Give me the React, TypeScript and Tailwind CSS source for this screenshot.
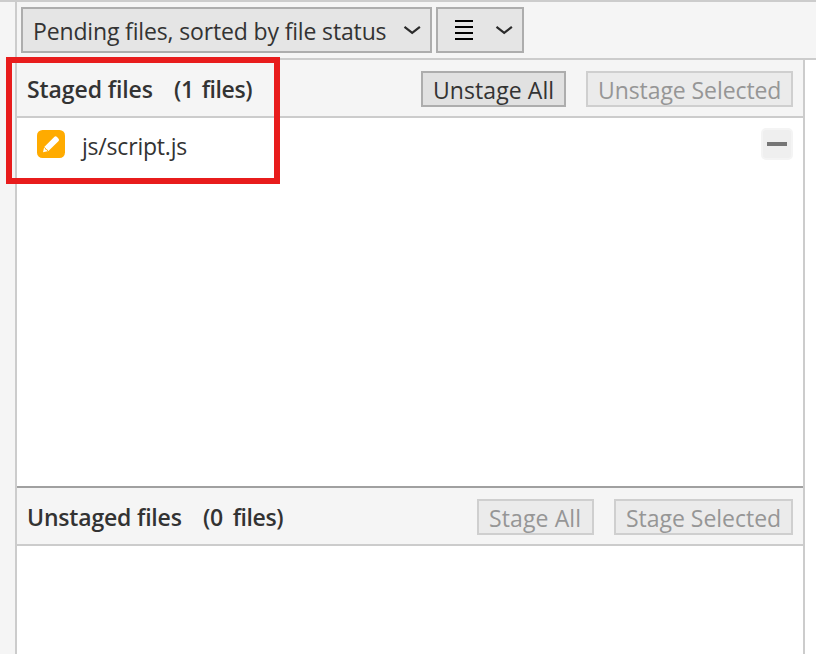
import type { ReactNode } from "react";

function Chevron() {
  return (
    <svg width="18" height="10" viewBox="0 0 18 10" fill="none" stroke="#2b2b2b" strokeWidth="2.2" className="block shrink-0">
      <path d="M1.5 1.8 L9.2 7.8 L16.9 1.8" />
    </svg>
  );
}

function ActionButton({ children, className }: { children: ReactNode; className: string }) {
  return (
    <button className={`flex h-9 shrink-0 items-center border-2 pt-0.5 pl-[10px] whitespace-nowrap ${className}`}>
      {children}
    </button>
  );
}

const enabled = "border-[#adadad] bg-[#e1e1e1] text-[#333333]";
const disabled = "border-[#cfcfcf] bg-[#ebebeb] text-[#969696]";

function PencilBadge() {
  return (
    <svg width="28" height="28" viewBox="0 0 28 28" className="block shrink-0">
      <rect width="28" height="28" rx="5.5" fill="#ffab00" />
      <path
        d="M6 22.2 L7.2 17 L17.2 7 Q18.6 5.6 20 7 L21.4 8.4 Q22.8 9.8 21.4 11.2 L11.4 21.1 Z"
        fill="#ffffff"
      />
      <path d="M7.2 17.4 L8.3 18 L8.7 19.4 L10.2 19.8 L10.8 21" fill="none" stroke="#ffab00" strokeWidth="0.9" />
    </svg>
  );
}

export default function App() {
  return (
    <div className="relative flex h-[654px] w-[816px] flex-col overflow-hidden border-t-2 border-[#cccccc] bg-[#f5f5f5] font-['Open_Sans','Noto_Sans',sans-serif] text-[23px] leading-[32px] text-[#333333]">
      <div className="flex min-h-0 flex-1">
        <div className="w-[17px] shrink-0 border-r-2 border-[#cccccc]" />
        <div className="flex min-w-0 flex-1 flex-col">
          <div className="flex h-[58px] shrink-0 gap-1 border-b-2 border-[#cccccc] pt-[5px] pl-1">
            <button className="flex h-[46px] w-[411px] items-center justify-between border-2 border-[#adadad] bg-[#e5e5e5] pr-[9px] pl-[10px]">
              <span className="pt-0.5 tracking-[-0.15px] whitespace-nowrap">Pending files, sorted by file status</span>
              <Chevron />
            </button>
            <button className="flex h-[46px] w-[88px] items-center justify-between border-2 border-[#adadad] bg-[#e5e5e5] pr-[9px] pl-[17px]">
              <span className="flex w-[18px] flex-col gap-1">
                <span className="h-[2px] bg-black" />
                <span className="h-[2px] bg-black" />
                <span className="h-[2px] bg-black" />
                <span className="h-[2px] bg-black" />
              </span>
              <Chevron />
            </button>
          </div>
          <div className="flex min-h-0 flex-1 bg-white">
            <div className="flex w-[788px] flex-col border-r-2 border-[#cccccc]">
              <div className="flex h-[58px] shrink-0 items-center border-b-2 border-[#cccccc] bg-[#f5f5f5] pr-[10px] pl-[10px]">
                <h2 className="flex flex-1 pt-0.5 font-semibold whitespace-nowrap">
                  <span className="w-[147px] tracking-[-0.09px]">Staged files</span>
                  <span className="flex gap-2 tracking-[-0.4px]">
                    <span>(1</span>
                    <span>files)</span>
                  </span>
                </h2>
                <div className="flex gap-5 pt-0.5">
                  <ActionButton className={`w-[145px] tracking-[0.08px] ${enabled}`}>Unstage All</ActionButton>
                  <ActionButton className={`w-[207px] tracking-[-0.08px] ${disabled}`}>Unstage Selected</ActionButton>
                </div>
              </div>
              <div className="flex h-[368px] shrink-0 items-start justify-between pt-[10px] pr-[10px] pl-5">
                <div className="flex h-8 items-center">
                  <PencilBadge />
                  <span className="pt-[3px] pl-[17px] tracking-[-0.2px]">js/script.js</span>
                </div>
                <button className="flex size-8 items-center justify-center rounded-[5px] border-2 border-[#f4f4f4] bg-[#efefef]">
                  <span className="h-1 w-5 bg-[#767676]" />
                </button>
              </div>
              <div className="flex h-[60px] shrink-0 items-center border-t-2 border-b-2 border-t-[#a0a0a0] border-b-[#cccccc] bg-[#f5f5f5] pr-[10px] pl-[10px]">
                <h2 className="flex flex-1 pt-0.5 font-semibold whitespace-nowrap">
                  <span className="w-[176px] tracking-[-0.18px]">Unstaged files</span>
                  <span className="flex gap-[10px] tracking-[-0.4px]">
                    <span>(0</span>
                    <span>files)</span>
                  </span>
                </h2>
                <div className="flex gap-5 pt-0.5">
                  <ActionButton className={`w-[117px] tracking-[0.12px] ${disabled}`}>Stage All</ActionButton>
                  <ActionButton className={`w-[179px] tracking-[-0.02px] ${disabled}`}>Stage Selected</ActionButton>
                </div>
              </div>
            </div>
          </div>
        </div>
      </div>
      <div className="pointer-events-none absolute top-[55px] left-[6px] h-[127px] w-[274px] border-[6px] border-[#e81c1c]" />
    </div>
  );
}
